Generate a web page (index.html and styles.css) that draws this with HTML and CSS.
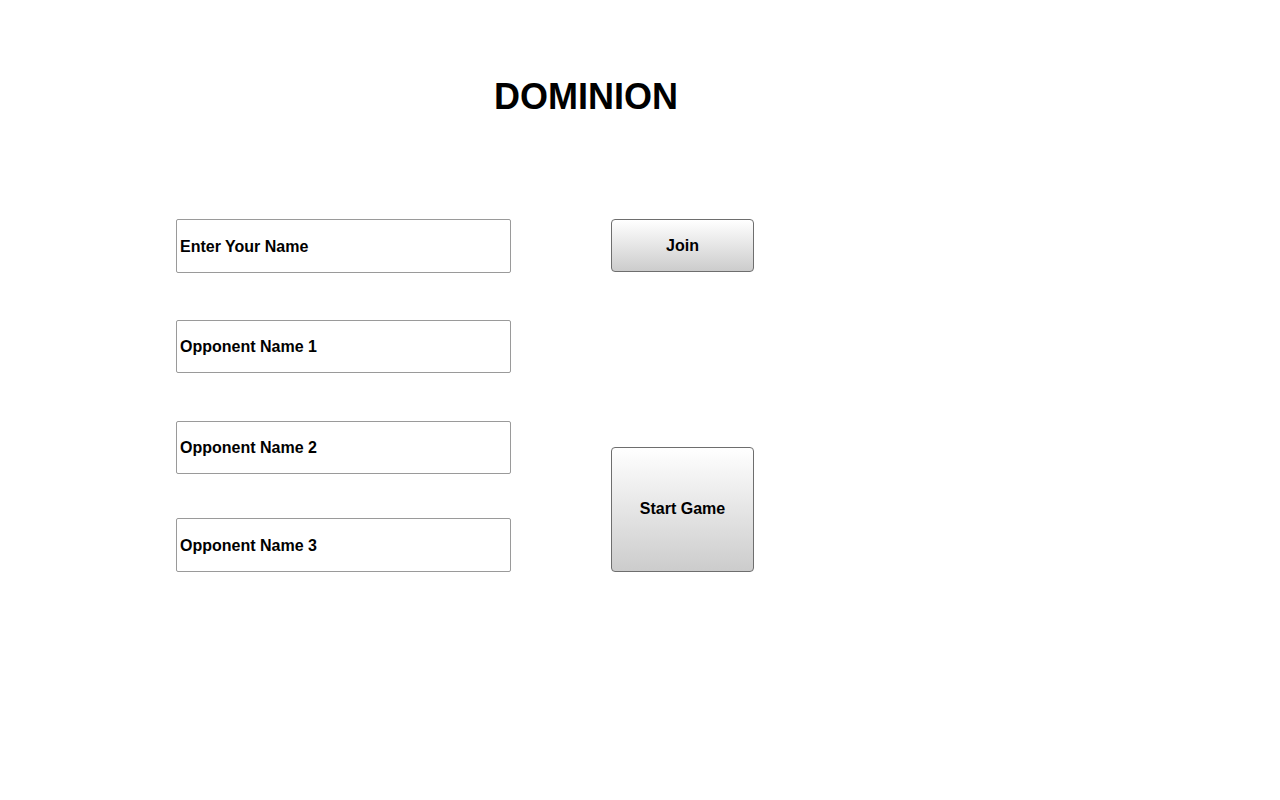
FILE: index.html
```html
<!DOCTYPE html>
<html>
<head>
<meta charset="utf-8">
<title>Dominion</title>
<link rel="stylesheet" href="styles.css">
</head>
<body>
<div class="page">
  <h1 class="title">DOMINION</h1>
  <div class="form">
    <div class="names">
      <input class="name-input tall" type="text" placeholder="Enter Your Name">
      <input class="name-input gap-a" type="text" placeholder="Opponent Name 1">
      <input class="name-input gap-b" type="text" placeholder="Opponent Name 2">
      <input class="name-input tall gap-c" type="text" placeholder="Opponent Name 3">
    </div>
    <div class="actions">
      <button class="btn join">Join</button>
      <button class="btn start">Start Game</button>
    </div>
  </div>
</div>
</body>
</html>
```

FILE: styles.css
```css
html, body {
  margin: 0;
  padding: 0;
  background: #fff;
}
body {
  font-family: "Liberation Sans", Arial, sans-serif;
  color: #000;
}
.page {
  padding-left: 176px;
  width: 820px;
}
.title {
  margin: 0;
  padding-top: 76px;
  font-size: 36px;
  line-height: 41px;
  font-weight: bold;
  text-align: center;
}
.form {
  display: flex;
  gap: 100px;
  margin-top: 102px;
}
.names {
  display: flex;
  flex-direction: column;
  width: 335px;
}
.name-input {
  box-sizing: border-box;
  width: 335px;
  height: 53px;
  margin: 0;
  padding: 1px 3px 0;
  border: 1px solid #9a9a9a;
  border-radius: 2px;
  font-family: "Liberation Sans", Arial, sans-serif;
  font-size: 16px;
  font-weight: bold;
  color: #000;
  background: #fff;
  outline: none;
}
.name-input.tall { height: 54px; }
.name-input::placeholder {
  color: #000;
  opacity: 1;
}
.gap-a { margin-top: 47px; }
.gap-b { margin-top: 48px; }
.gap-c { margin-top: 44px; }
.actions {
  display: flex;
  flex-direction: column;
  justify-content: space-between;
  width: 143px;
}
.btn {
  box-sizing: border-box;
  width: 143px;
  margin: 0;
  padding: 0;
  border: 1px solid #6e6e6e;
  border-radius: 4px;
  background: linear-gradient(to bottom, #ffffff 0%, #cccccc 100%);
  font-family: "Liberation Sans", Arial, sans-serif;
  font-size: 16px;
  font-weight: bold;
  color: #000;
}
.join { height: 53px; }
.start { height: 125px; padding-bottom: 2px; }
```
